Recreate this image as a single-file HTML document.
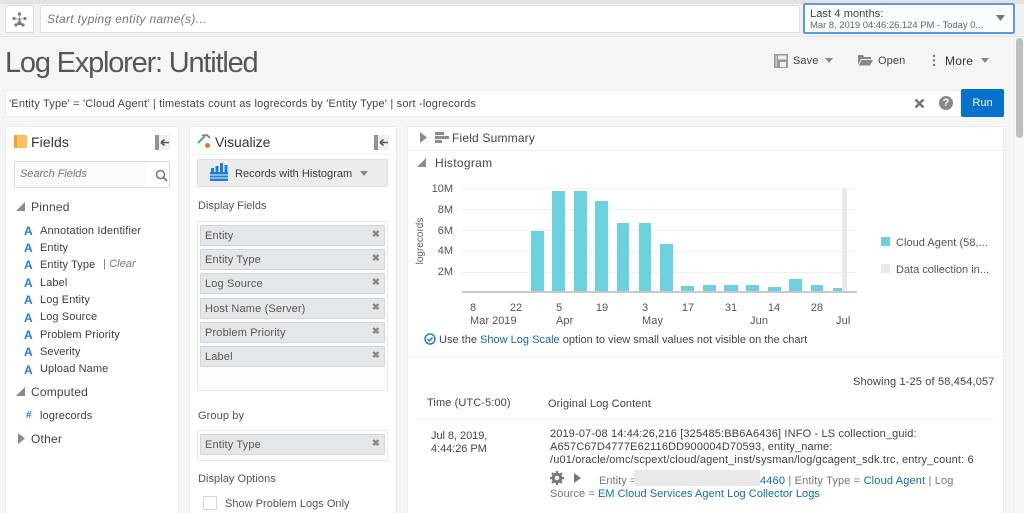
<!DOCTYPE html>
<html><head><meta charset="utf-8">
<style>
html,body{margin:0;padding:0;width:1024px;height:513px;overflow:hidden;background:#f5f5f5}
body{position:relative;font-family:"Liberation Sans",sans-serif;font-size:11px;color:#3f3f3f;filter:blur(.3px)}
.a,.t{position:absolute}
.t{white-space:nowrap;line-height:14px;letter-spacing:.1px}
.box{position:absolute;background:#fff;box-sizing:border-box}
.chip{position:absolute;left:200px;width:185px;height:21px;background:#e3e7ea;border:1px solid #cfd6dc;box-sizing:border-box;border-radius:2px;color:#555;line-height:20px;padding-left:4px;letter-spacing:.15px}
.chip b{position:absolute;right:4px;top:0;color:#888;font-size:9.5px;font-weight:bold;line-height:18px}
.A{position:absolute;left:24px;color:#1f7fd6;font-weight:bold;font-size:12px;line-height:14px}
.g{position:absolute;left:462px;width:395px;height:1px;background:#eef0f2}
.b{position:absolute;background:#6bd1de}
.y{position:absolute;width:30px;left:423px;text-align:right;line-height:14px;color:#555}
.x{position:absolute;width:30px;text-align:center;line-height:14px;color:#555}
a{color:#0e6fa8}
</style></head><body>
<div class="a" style="left:0;top:0;width:1024px;height:37px;background:#f1f1f1;border-bottom:1px solid #e4e4e4;box-sizing:border-box"></div>
<div class="a" style="left:0;top:0;width:1024px;height:4px;background:#e3e3e3"></div>
<div class="box" style="left:5px;top:5px;width:29px;height:28px;border:1px solid #d8dadc;border-radius:2px"></div>
<svg class="a" style="left:11px;top:11px" width="17" height="17" viewBox="0 0 17 17" fill="#7a7a7a"><path d="M8.500 3V8.500M3 7.500L8.500 8.500L14 7.500M5 14L8.500 8.500L12 14" stroke="#aaa" stroke-width=".8"/><circle cx="8.500" cy="3" r="1.600"/><circle cx="3" cy="7.500" r="1.600"/><circle cx="14" cy="7.500" r="1.600"/><circle cx="5" cy="14" r="1.600"/><circle cx="12" cy="14" r="1.600"/><circle cx="8.500" cy="8.500" r="1"/></svg>
<div class="box" style="left:40px;top:5px;width:760px;height:28px;border:1px solid #d9e2ea;border-radius:2px"></div>
<div class="t" style="left:47px;top:12px;font-size:12px;font-style:italic;color:#777;letter-spacing:.32px">Start typing entity name(s)...</div>
<div class="box" style="left:803px;top:3px;width:212px;height:31px;border:2px solid #5b9be0;border-radius:2px;background:#fafcff"></div>
<div class="t" style="left:810px;top:7px;color:#444">Last 4 months:</div>
<div class="t" style="left:810px;top:19px;color:#666;font-size:9.5px;letter-spacing:-.05px">Mar 8, 2019 04:46:26.124 PM - Today 0...</div>
<svg class="a" style="left:996px;top:15px" width="10" height="7"><path d="M0 0H9L4.500 6Z" fill="#777"/></svg>

<div class="a" style="left:1013px;top:37px;width:11px;height:476px;background:#f7f7f7;border-left:1px solid #ececec;box-sizing:border-box"></div>
<div class="a" style="left:1016px;top:38px;width:7px;height:100px;background:#bdbdbd;border-radius:4px"></div>

<div class="t" style="left:5px;top:46px;font-size:29px;line-height:34px;color:#565656;letter-spacing:-1.2px">Log Explorer: Untitled</div>
<svg class="a" style="left:774px;top:54px" width="14" height="14"><rect width="14" height="14" fill="#999"/><rect x="4" y="1.500" width="8.500" height="4" fill="#eee"/><rect x="1.500" y="1.500" width="1.500" height="11" fill="#ccc"/><rect x="6" y="8" width="6" height="5" fill="#eee"/></svg>
<div class="t" style="left:793px;top:54px;color:#444">Save</div>
<svg class="a" style="left:825px;top:58px" width="9" height="6"><path d="M0 0H8L4 5Z" fill="#888"/></svg>
<svg class="a" style="left:858px;top:54px" width="15" height="12"><path d="M0 1H5L6 3H13V5H3L0 11ZM3.500 6H15L12 11.500H.8Z" fill="#888"/></svg>
<div class="t" style="left:878px;top:54px;color:#444">Open</div>
<svg class="a" style="left:932px;top:54px" width="4" height="13" fill="#777"><circle cx="2" cy="2" r="1.200"/><circle cx="2" cy="6.500" r="1.200"/><circle cx="2" cy="11" r="1.200"/></svg>
<div class="t" style="left:945px;top:54px;font-size:12px;color:#333;letter-spacing:.2px">More</div>
<svg class="a" style="left:981px;top:58px" width="9" height="6"><path d="M0 0H8L4 5Z" fill="#888"/></svg>

<div class="box" style="left:5px;top:90px;width:956px;height:27px;border:1px solid #eceff1"></div>
<div class="t" style="left:9px;top:97px;letter-spacing:.19px;color:#444">'Entity Type' = 'Cloud Agent' | timestats count as logrecords by 'Entity Type' | sort -logrecords</div>
<svg class="a" style="left:914px;top:98px" width="11" height="11"><path d="M1.500 1.500L9.500 9.500M9.500 1.500L1.500 9.500" stroke="#777" stroke-width="2.600"/></svg>
<div class="a" style="left:939px;top:96px;width:14px;height:14px;border-radius:50%;background:#888;color:#fff;font-weight:bold;font-size:11px;line-height:14px;text-align:center">?</div>
<div class="a" style="left:961px;top:89px;width:43px;height:28px;background:#0572ce;border-radius:2px;color:#fff;text-align:center;line-height:28px;font-size:11px">Run</div>

<!-- Fields -->
<div class="box" style="left:5px;top:126px;width:174px;height:387px;border:1px solid #e8edf1;border-bottom:0"></div>
<div class="a" style="left:14px;top:135px;width:13px;height:13px;background:#fbc15e;border-left:3px solid #f59d30;box-sizing:border-box;border-radius:1px"></div>
<div class="t" style="left:31px;top:134px;font-size:14px;line-height:16px;color:#333">Fields</div>
<svg class="a" style="left:155px;top:135px" width="15" height="15"><rect width="15" height="15" fill="#eef0f1"/><rect width="4" height="15" fill="#8f9498"/><path d="M6 7.500H14M6 7.500L9.500 4.500M6 7.500L9.500 10.500" stroke="#555" stroke-width="1.500" fill="none"/></svg>
<div class="box" style="left:14px;top:161px;width:156px;height:27px;border:1px solid #d4dee6;border-radius:2px;background:#fff"></div>
<div class="a" style="left:16px;top:163px;width:131px;height:23px;background:#fafafa"></div>
<div class="t" style="left:20px;top:167px;font-style:italic;color:#777;letter-spacing:-.03px">Search Fields</div>
<svg class="a" style="left:155px;top:169px" width="13" height="13"><circle cx="5.500" cy="5.500" r="4" fill="none" stroke="#777" stroke-width="1.500"/><path d="M8.500 8.500L12 12" stroke="#777" stroke-width="1.800"/></svg>
<svg class="a" style="left:16px;top:202px" width="10" height="10"><path d="M9 0V9H0Z" fill="#8c8c8c"/></svg>
<div class="t" style="left:31px;top:200px;font-size:12px;color:#444;letter-spacing:.2px">Pinned</div>
<div class="A" style="top:224px">A</div><div class="t" style="left:40px;top:224px;letter-spacing:.16px">Annotation Identifier</div>
<div class="A" style="top:241px">A</div><div class="t" style="left:40px;top:241px">Entity</div>
<div class="A" style="top:258px">A</div><div class="t" style="left:40px;top:258px">Entity Type</div>
<div class="t" style="left:103px;top:257px;color:#777">| <i>Clear</i></div>
<div class="A" style="top:276px">A</div><div class="t" style="left:40px;top:276px">Label</div>
<div class="A" style="top:293px">A</div><div class="t" style="left:40px;top:293px">Log Entity</div>
<div class="A" style="top:311px">A</div><div class="t" style="left:40px;top:310px">Log Source</div>
<div class="A" style="top:328px">A</div><div class="t" style="left:40px;top:328px">Problem Priority</div>
<div class="A" style="top:345px">A</div><div class="t" style="left:40px;top:345px">Severity</div>
<div class="A" style="top:363px">A</div><div class="t" style="left:40px;top:362px">Upload Name</div>
<svg class="a" style="left:16px;top:387px" width="10" height="10"><path d="M9 0V9H0Z" fill="#8c8c8c"/></svg>
<div class="t" style="left:31px;top:385px;font-size:12px;color:#444;letter-spacing:.2px">Computed</div>
<div class="t" style="left:26px;top:409px;color:#1f7fd6;font-weight:bold;font-size:10px">#</div>
<div class="t" style="left:40px;top:409px">logrecords</div>
<svg class="a" style="left:18px;top:433px" width="8" height="12"><path d="M0 0L7 5.500L0 11Z" fill="#8c8c8c"/></svg>
<div class="t" style="left:31px;top:432px;font-size:12px;color:#444;letter-spacing:.2px">Other</div>

<!-- Visualize -->
<div class="box" style="left:189px;top:126px;width:208px;height:387px;border:1px solid #e8edf1;border-bottom:0"></div>
<div class="a" style="left:189px;top:154px;width:208px;height:1px;background:#eef1f3"></div>
<svg class="a" style="left:197px;top:134px" width="15" height="15"><path d="M1 9L8 2" stroke="#5b9bc9" stroke-width="2"/><path d="M5 1.500L10 1L13 4" stroke="#777" stroke-width="1.600" fill="none"/><circle cx="10.500" cy="11.500" r="2.500" fill="#e8772e"/></svg>
<div class="t" style="left:215px;top:134px;font-size:14px;line-height:16px;color:#333;letter-spacing:-.05px">Visualize</div>
<svg class="a" style="left:374px;top:135px" width="15" height="15"><rect width="15" height="15" fill="#eef0f1"/><rect width="4" height="15" fill="#8f9498"/><path d="M6 7.500H14M6 7.500L9.500 4.500M6 7.500L9.500 10.500" stroke="#555" stroke-width="1.500" fill="none"/></svg>
<div class="a" style="left:197px;top:159px;width:191px;height:28px;background:#ececec;border:1px solid #dedede;box-sizing:border-box;border-radius:2px"></div>
<svg class="a" style="left:210px;top:163px" width="18" height="18" fill="#1f7fd6"><rect x="0" y="9" width="18" height="2.500"/><rect x="0" y="12.500" width="18" height="2"/><rect x="0" y="15.500" width="18" height="2.500"/><rect x="1" y="5" width="3" height="4"/><rect x="5.500" y="3" width="3" height="6"/><rect x="10" y="0" width="3" height="9"/><rect x="14.500" y="2" width="3" height="7"/></svg>
<div class="t" style="left:235px;top:167px;color:#3a3a3a;letter-spacing:.02px">Records with Histogram</div>
<svg class="a" style="left:360px;top:171px" width="9" height="6"><path d="M0 0H8L4 5Z" fill="#888"/></svg>
<div class="t" style="left:198px;top:199px;color:#555;letter-spacing:0">Display Fields</div>
<div class="a" style="left:197px;top:221px;width:191px;height:170px;border:1px solid #e4ebf1;background:#fcfdff;box-sizing:border-box;border-radius:1px"></div>
<div class="chip" style="top:225px">Entity<b>✖</b></div>
<div class="chip" style="top:249px">Entity Type<b>✖</b></div>
<div class="chip" style="top:273px">Log Source<b>✖</b></div>
<div class="chip" style="top:298px">Host Name (Server)<b>✖</b></div>
<div class="chip" style="top:322px">Problem Priority<b>✖</b></div>
<div class="chip" style="top:346px">Label<b>✖</b></div>
<div class="t" style="left:198px;top:409px;color:#555;letter-spacing:.1px">Group by</div>
<div class="a" style="left:197px;top:430px;width:191px;height:31px;border:1px solid #e4ebf1;background:#fcfdff;box-sizing:border-box"></div>
<div class="chip" style="top:434px">Entity Type<b>✖</b></div>
<div class="t" style="left:198px;top:472px;color:#555;letter-spacing:.05px">Display Options</div>
<div class="a" style="left:203px;top:496px;width:14px;height:14px;background:#fff;border:1px solid #d5d5d5;box-sizing:border-box;border-radius:2px"></div>
<div class="t" style="left:225px;top:497px;color:#555;letter-spacing:.02px">Show Problem Logs Only</div>

<!-- Results -->
<div class="box" style="left:407px;top:126px;width:597px;height:387px;border:1px solid #e8edf1;border-bottom:0"></div>
<div class="a" style="left:408px;top:150px;width:595px;height:1px;background:#eef1f3"></div>
<svg class="a" style="left:420px;top:132px" width="8" height="12"><path d="M0 0L7 5.500L0 11Z" fill="#8c8c8c"/></svg>
<svg class="a" style="left:435px;top:132px" width="14" height="12" fill="#8c8c8c"><rect width="9" height="3"/><rect y="4" width="14" height="3"/><rect y="8" width="7" height="3"/></svg>
<div class="t" style="left:452px;top:131px;font-size:12px;color:#444;letter-spacing:.18px">Field Summary</div>
<svg class="a" style="left:417px;top:158px" width="10" height="10"><path d="M9 0V9H0Z" fill="#8c8c8c"/></svg>
<div class="t" style="left:435px;top:156px;font-size:12px;color:#444;letter-spacing:.3px">Histogram</div>

<div class="g" style="top:188px"></div><div class="g" style="top:209px"></div><div class="g" style="top:230px"></div><div class="g" style="top:251px"></div><div class="g" style="top:272px"></div>
<div class="y" style="top:182px">10M</div><div class="y" style="top:203px">8M</div><div class="y" style="top:224px">6M</div><div class="y" style="top:244px">4M</div><div class="y" style="top:265px">2M</div>
<div class="t" style="left:394px;top:234px;width:54px;text-align:center;transform:rotate(-90deg);font-size:10px;color:#666;letter-spacing:0">logrecords</div>
<div class="b" style="left:531px;top:231px;width:13px;height:61px"></div>
<div class="b" style="left:552px;top:191px;width:13px;height:101px"></div>
<div class="b" style="left:574px;top:191px;width:13px;height:101px"></div>
<div class="b" style="left:595px;top:201px;width:13px;height:91px"></div>
<div class="b" style="left:617px;top:223px;width:12px;height:69px"></div>
<div class="b" style="left:639px;top:223px;width:12px;height:69px"></div>
<div class="b" style="left:660px;top:244px;width:13px;height:48px"></div>
<div class="b" style="left:681px;top:286px;width:13px;height:6px"></div>
<div class="b" style="left:703px;top:285px;width:13px;height:7px"></div>
<div class="b" style="left:724px;top:285px;width:14px;height:7px"></div>
<div class="b" style="left:746px;top:285px;width:13px;height:7px"></div>
<div class="b" style="left:768px;top:287px;width:13px;height:5px"></div>
<div class="b" style="left:789px;top:279px;width:13px;height:13px"></div>
<div class="b" style="left:811px;top:285px;width:12px;height:7px"></div>
<div class="b" style="left:833px;top:288px;width:10px;height:4px"></div>
<div class="a" style="left:842px;top:189px;width:5px;height:103px;background:#e8e8e8"></div>
<div class="a" style="left:462px;top:291px;width:395px;height:2px;background:#c9c9c9"></div>
<div class="x" style="left:458px;top:301px">8</div><div class="x" style="left:501px;top:301px">22</div><div class="x" style="left:544px;top:301px">5</div><div class="x" style="left:587px;top:301px">19</div><div class="x" style="left:630px;top:301px">3</div><div class="x" style="left:673px;top:301px">17</div><div class="x" style="left:716px;top:301px">31</div><div class="x" style="left:759px;top:301px">14</div><div class="x" style="left:802px;top:301px">28</div>
<div class="t" style="left:470px;top:314px;color:#555;letter-spacing:.02px">Mar 2019</div>
<div class="t" style="left:556px;top:314px;color:#555">Apr</div>
<div class="t" style="left:642px;top:314px;color:#555">May</div>
<div class="t" style="left:750px;top:314px;color:#555">Jun</div>
<div class="t" style="left:836px;top:314px;color:#555">Jul</div>
<svg class="a" style="left:424px;top:333px" width="12" height="12"><circle cx="6" cy="6" r="5" fill="none" stroke="#1f7fd6" stroke-width="1.500"/><path d="M3.500 6L5.500 8L8.500 4.500" fill="none" stroke="#1f7fd6" stroke-width="1.500"/></svg>
<div class="t" style="left:439px;top:333px;color:#444;letter-spacing:.01px">Use the <a>Show Log Scale</a> option to view small values not visible on the chart</div>
<div class="a" style="left:881px;top:237px;width:9px;height:9px;background:#6bd1de"></div>
<div class="t" style="left:896px;top:236px;color:#555;letter-spacing:.04px">Cloud Agent (58,...</div>
<div class="a" style="left:881px;top:264px;width:9px;height:9px;background:#e8e8e8"></div>
<div class="t" style="left:896px;top:263px;color:#555;letter-spacing:0">Data collection in...</div>
<div class="a" style="left:408px;top:356px;width:595px;height:1px;background:#eef1f3"></div>
<div class="t" style="left:853px;top:375px;color:#444;letter-spacing:.15px">Showing 1-25 of 58,454,057</div>
<div class="t" style="left:427px;top:396px;color:#444;letter-spacing:.1px">Time (UTC-5:00)</div>
<div class="t" style="left:548px;top:397px;color:#444;letter-spacing:.1px">Original Log Content</div>
<div class="a" style="left:416px;top:419px;width:579px;height:1px;background:#eef1f3"></div>
<div class="t" style="left:431px;top:430px;color:#444;letter-spacing:-.05px;line-height:13px">Jul 8, 2019,<br>4:44:26 PM</div>
<div class="t" style="left:550px;top:428px;color:#3f3f3f;letter-spacing:.15px;line-height:13px">2019-07-08 14:44:26,216 [325485:BB6A6436] INFO - LS collection_guid:<br>A657C67D4777E62116DD900004D70593, entity_name:<br>/u01/oracle/omc/scpext/cloud/agent_inst/sysman/log/gcagent_sdk.trc, entry_count: 6</div>
<svg class="a" style="left:550px;top:471px" width="14" height="14"><circle cx="7" cy="7" r="3.800" fill="none" stroke="#777" stroke-width="3"/><path d="M7 0V3M7 11V14M0 7H3M11 7H14M2 2L4 4M10 10L12 12M12 2L10 4M4 10L2 12" stroke="#777" stroke-width="2.200"/></svg>
<svg class="a" style="left:574px;top:473px" width="8" height="12"><path d="M0 0L7 5L0 10Z" fill="#777"/></svg>
<div class="t" style="left:599px;top:474px;color:#777;letter-spacing:.05px">Entity =</div>
<div class="a" style="left:634px;top:470px;width:126px;height:16px;background:#e9e9e9"></div>
<div class="t" style="left:760px;top:474px;color:#777;letter-spacing:.16px"><a>4460</a> | Entity Type = <a>Cloud Agent</a> | Log</div>
<div class="t" style="left:550px;top:487px;color:#777;letter-spacing:.06px">Source = <a>EM Cloud Services Agent Log Collector Logs</a></div>
</body></html>
